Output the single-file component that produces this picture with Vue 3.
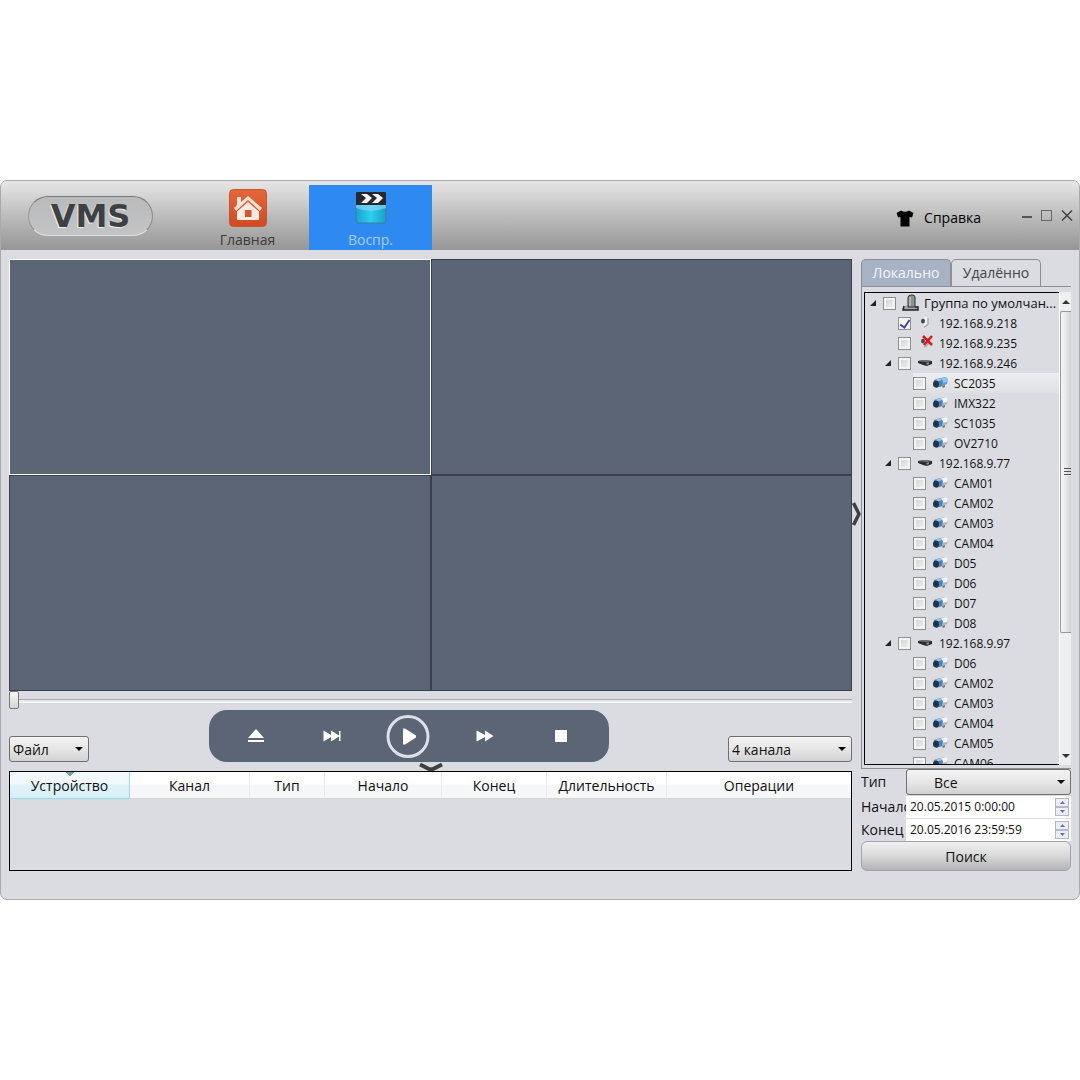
<script setup>
import { ref } from 'vue'

const file = ref('Файл')
const layout = ref('4 канала')
const recordType = ref('Все')
const position = ref(0)
const dates = ref([
  { id: 'start', label: 'Начало', value: '20.05.2015 0:00:00' },
  { id: 'end', label: 'Конец', value: '20.05.2016 23:59:59' },
])

const columns = [
  { title: 'Устройство', cls: 'c-device' },
  { title: 'Канал', cls: 'c-channel' },
  { title: 'Тип', cls: 'c-type' },
  { title: 'Начало', cls: 'c-start' },
  { title: 'Конец', cls: 'c-end' },
  { title: 'Длительность', cls: 'c-length' },
  { title: 'Операции', cls: 'c-actions' },
]

const cams = (...names) => names.map((name) => ({ name, level: 3, kind: 'cam', checked: false }))
const tree = ref([
  { name: 'Группа по умолчан...', level: 1, kind: 'group', open: true, checked: false },
  { name: '192.168.9.218', level: 2, kind: 'ipc', checked: true },
  { name: '192.168.9.235', level: 2, kind: 'offline', checked: false },
  { name: '192.168.9.246', level: 2, kind: 'dvr', open: true, checked: false },
  { name: 'SC2035', level: 3, kind: 'cam', checked: false, active: true },
  ...cams('IMX322', 'SC1035', 'OV2710'),
  { name: '192.168.9.77', level: 2, kind: 'dvr', open: true, checked: false },
  ...cams('CAM01', 'CAM02', 'CAM03', 'CAM04', 'D05', 'D06', 'D07', 'D08'),
  { name: '192.168.9.97', level: 2, kind: 'dvr', open: true, checked: false },
  ...cams('D06', 'CAM02', 'CAM03', 'CAM04', 'CAM05', 'CAM06'),
])
</script>

<template>
  <div class="page">
    <div class="window">
      <header class="header">
        <div class="logo">VMS</div>
        <nav class="nav">
          <a href="#" class="nav-item">
            <svg width="38" height="38" viewBox="0 0 38 38">
              <defs>
                <linearGradient id="home-bg" x1="0" y1="0" x2="0" y2="1">
                  <stop offset="0" stop-color="#e4673a" />
                  <stop offset="1" stop-color="#cf4c22" />
                </linearGradient>
              </defs>
              <rect x="0.5" y="0.5" width="37" height="37" rx="4" fill="url(#home-bg)" stroke="#c4552e" />
              <path d="M8 8h4v5l7-6 14 12-2 3-12-11L7 22l-2-3 3-3z" fill="#fbe3d8" />
              <path d="M8 22.500 19 13l11 9.500V31H8z" fill="#fbeae2" />
              <rect x="16" y="21" width="6.500" height="7" fill="#d4552b" />
            </svg>
            <span>Главная</span>
          </a>
          <a href="#" class="nav-item active">
            <svg width="32" height="34" viewBox="0 0 32 34">
              <defs>
                <linearGradient id="clap" x1="0" y1="0" x2="1" y2="0">
                  <stop offset="0" stop-color="#1d9fd0" />
                  <stop offset="0.5" stop-color="#2cd0f2" />
                  <stop offset="1" stop-color="#1d9ccc" />
                </linearGradient>
              </defs>
              <path d="M1 13h30v17q0 2-2 2H3q-2 0-2-2z" fill="url(#clap)" stroke="#3d7ca6" />
              <path d="M1 13h30v4q-15 6-30 0z" fill="#8bdcf5" opacity="0.6" />
              <path d="M2 1h28q1 0 1 1v12H1V2q0-1 1-1z" fill="#25292d" />
              <path d="M6 3h6l5 4-5 5H6l5-5zM17 3h6l5 4-5 5h-6l5-5z" fill="#f4f4f4" />
            </svg>
            <span>Воспр.</span>
          </a>
        </nav>
        <a href="#" class="help">
          <svg width="18" height="17" viewBox="0 0 18 17">
            <path d="M5 0.500Q9 3 13 0.500L17.500 3 16 7.500 13.500 7V16.500H4.500V7L2 7.500 0.500 3z" fill="#000" />
          </svg>
          <span>Справка</span>
        </a>
        <div class="win-buttons">
          <button type="button" aria-label="Свернуть">
            <svg width="12" height="12" viewBox="0 0 12 12"><path d="M1 8h10" stroke="#555" stroke-width="2" /></svg>
          </button>
          <button type="button" aria-label="Развернуть">
            <svg width="12" height="12" viewBox="0 0 12 12"><rect x="0.500" y="1.500" width="10" height="10" fill="none" stroke="#666" /></svg>
          </button>
          <button type="button" aria-label="Закрыть">
            <svg width="12" height="12" viewBox="0 0 12 12"><path d="M1 1.500l10 10M11 1.500l-10 10" stroke="#444" stroke-width="1.500" /></svg>
          </button>
        </div>
      </header>

      <main class="main">
        <section class="player">
          <div class="videos">
            <div v-for="n in 4" :key="n" class="video" :class="{ selected: n === 1 }"></div>
          </div>
          <input v-model="position" class="seek" type="range" min="0" max="100" aria-label="Позиция" />
          <div class="controls">
            <span class="select file">
              <select v-model="file" aria-label="Файл"><option>Файл</option></select>
              <svg width="8" height="4" viewBox="0 0 8 4"><path d="M0 0h8L4 4z" /></svg>
            </span>
            <div class="transport">
              <button type="button" aria-label="Извлечь">
                <svg width="16" height="16" viewBox="0 0 16 16" fill="#fff"><path d="M8 1l8 9H0zM0 12h16v2H0z" /></svg>
              </button>
              <button type="button" aria-label="Кадр вперёд">
                <svg width="18" height="12" viewBox="0 0 18 12" fill="#fff"><path d="M0.500 0.500 8 5V0.500L16 5.500V1h1.500v10H16V6.500L8 11.500V7L0.500 11.500z" /></svg>
              </button>
              <button type="button" aria-label="Воспроизвести">
                <svg width="44" height="44" viewBox="0 0 44 44">
                  <circle cx="22" cy="22.500" r="20" fill="none" stroke="#dce0e8" stroke-width="3" />
                  <path d="M17 14.500v16h2l11-7v-2l-11-7z" fill="#fff" />
                </svg>
              </button>
              <button type="button" aria-label="Быстрее">
                <svg width="18" height="12" viewBox="0 0 18 12" fill="#fff"><path d="M0.500 0.500 9 5V0.500L17.500 6 9 11.500V7L0.500 11.500z" /></svg>
              </button>
              <button type="button" aria-label="Стоп">
                <svg width="12" height="12" viewBox="0 0 12 12"><path d="M0 0h12v12H0z" fill="#fff" /></svg>
              </button>
            </div>
            <span class="select layout">
              <select v-model="layout" aria-label="Каналы"><option>4 канала</option></select>
              <svg width="8" height="4" viewBox="0 0 8 4"><path d="M0 0h8L4 4z" /></svg>
            </span>
          </div>
          <button class="fold-down" type="button" aria-label="Свернуть таблицу">
            <svg width="24" height="9" viewBox="0 0 24 9"><path d="M1 2.500 9 6.500q3 1.500 6 0L23 2.500" fill="none" stroke="#3f4043" stroke-width="4" /></svg>
          </button>
          <div class="records">
            <table>
              <thead>
                <tr>
                  <th v-for="c in columns" :key="c.title" :class="c.cls">{{ c.title }}</th>
                </tr>
              </thead>
            </table>
          </div>
        </section>

        <div class="splitter">
          <button type="button" aria-label="Скрыть панель">
            <svg width="9" height="24" viewBox="0 0 9 24"><path d="M1.500 1 7 12 1.500 23" fill="none" stroke="#3f4043" stroke-width="3.500" /></svg>
          </button>
        </div>

        <aside class="side">
          <div class="tabs">
            <button type="button" class="tab on">Локально</button>
            <button type="button" class="tab">Удалённо</button>
          </div>
          <div class="tree-frame">
            <div class="tree">
              <ul>
                <li v-for="(item, i) in tree" :key="i" :class="['level-' + item.level, { active: item.active }]">
                  <span class="twist">
                    <svg v-if="item.open" width="6" height="6" viewBox="0 0 6 6"><path d="M6 0v6H0z" fill="#222" /></svg>
                  </span>
                  <label>
                    <input v-model="item.checked" type="checkbox" />
                    <svg v-if="item.kind === 'group'" class="icon-group" width="18" height="18" viewBox="0 0 18 18">
                      <path d="M2 12l5-1 9 1v4H2z" fill="#a3aaa5" />
                      <path d="M6 13V3q0-2 4-2 3 0 3 2v10z" fill="#8a948d" stroke="#303530" />
                      <path d="M8 3v9" stroke="#d4dad5" />
                      <path d="M2 12l-1 4h15v-3h-3" fill="none" stroke="#222" stroke-width="1.500" />
                    </svg>
                    <svg v-else-if="item.kind === 'ipc' || item.kind === 'offline'" class="icon" width="16" height="16" viewBox="0 0 16 16">
                      <path d="M5 3l5-1 1 6-4 3z" fill="#f2f2f2" />
                      <path d="M11 3v6q-1 2-4 3" fill="none" stroke="#aaa" stroke-width="1.500" />
                      <ellipse cx="6" cy="6" rx="2" ry="2.500" fill="#4a4a4e" />
                      <path v-if="item.kind === 'offline'" d="M6 1l9 9M15 1L7 10" stroke="#d8171c" stroke-width="2.500" />
                    </svg>
                    <svg v-else-if="item.kind === 'dvr'" class="icon" width="16" height="16" viewBox="0 0 16 16">
                      <path d="M1 6l6-1 8 1v3l-5 2-4-1-5-2z" fill="#2b2b2d" />
                      <path d="M1 6l6-1 8 1-6 1z" fill="#777" />
                      <path d="M9 8l3-1v2l-2 1z" fill="#8a8a8c" />
                    </svg>
                    <svg v-else class="icon" width="16" height="16" viewBox="0 0 16 16">
                      <path d="M6 4l7-2 3 2-1 5-7 3z" :fill="item.active ? '#5d9bd8' : '#aab6c2'" />
                      <path d="M8 4l6-2 2 2-1 3-6 1z" :fill="item.active ? '#8cc4f2' : '#f2f5f8'" />
                      <path d="M2 5l6-2 3 3-1 5-6 2z" fill="#4d83b5" />
                      <path d="M3 5l5-2 2 2-5 2z" fill="#9cc4e6" />
                      <ellipse cx="4" cy="9" rx="3" ry="3.500" fill="#20344a" />
                      <path d="M10 11l3-1v2l-2 1z" fill="#777" />
                    </svg>
                    <span class="name">{{ item.name }}</span>
                  </label>
                </li>
              </ul>
              <div class="scroll">
                <svg width="8" height="4" viewBox="0 0 8 4"><path d="M4 0l4 4H0z" fill="#333" /></svg>
                <div class="thumb"><i></i><i></i><i></i></div>
                <svg width="8" height="4" viewBox="0 0 8 4"><path d="M0 0h8L4 4z" fill="#333" /></svg>
              </div>
            </div>
          </div>
          <form class="search" @submit.prevent>
            <div class="field">
              <label for="type">Тип</label>
              <span class="select type">
                <select id="type" v-model="recordType"><option>Все</option></select>
                <svg width="8" height="4" viewBox="0 0 8 4"><path d="M0 0h8L4 4z" /></svg>
              </span>
            </div>
            <div v-for="d in dates" :key="d.id" class="field date">
              <label :for="d.id">{{ d.label }}</label>
              <div class="date-box">
                <input :id="d.id" v-model="d.value" type="text" />
                <span class="spin">
                  <button type="button" aria-label="Больше">
                    <svg width="5" height="3" viewBox="0 0 5 3"><path d="M2.500 0L5 3H0z" fill="#6670a8" /></svg>
                  </button>
                  <button type="button" aria-label="Меньше">
                    <svg width="5" height="3" viewBox="0 0 5 3"><path d="M0 0h5L2.500 3z" fill="#6670a8" /></svg>
                  </button>
                </span>
              </div>
            </div>
            <button type="submit" class="go">Поиск</button>
          </form>
        </aside>
      </main>
    </div>
  </div>
</template>

<style>
body {
  margin: 0;
  background: #fff;
}
</style>

<style scoped>
* {
  box-sizing: border-box;
}
svg {
  display: block;
  flex: none;
}
button,
input,
select {
  font: inherit;
  color: inherit;
  margin: 0;
}
button {
  padding: 0;
  border: 0;
  background: none;
}
.page {
  min-height: 100vh;
  display: flex;
  flex-direction: column;
  justify-content: center;
  font: 14px/20px "Open Sans", "Noto Sans", sans-serif;
  color: #111;
}
.window {
  border: 1px solid #a9aaad;
  border-radius: 7px;
  background: #dbdce1;
  overflow: hidden;
}
.header {
  height: 69px;
  display: flex;
  background: linear-gradient(#e6e6e6, #bdbdbd 50%, #969696);
}
.logo {
  width: 125px;
  height: 40px;
  margin: 15px 0 0 27px;
  border: 1px solid;
  border-color: #777 #888 #ddd #999;
  border-radius: 20px;
  background: linear-gradient(#b9babc, #c3c4c6);
  font: bold 32px/38px "DejaVu Sans", sans-serif;
  text-align: center;
  color: #3f4042;
  text-shadow: -1px 1px 0 #eee;
}
.nav {
  display: flex;
  margin: 4px 0 0 33px;
}
.nav-item {
  width: 123px;
  display: flex;
  flex-direction: column;
  align-items: center;
  justify-content: space-between;
  padding-top: 4px;
  color: #3b3b3b;
  text-decoration: none;
}
.nav-item.active {
  background: #2e8af0;
  color: #a9cbf2;
  padding-top: 6px;
}
.help {
  margin: 28px 40px 0 auto;
  height: 18px;
  display: flex;
  align-items: center;
  gap: 10px;
  color: #000;
  text-decoration: none;
}
.win-buttons {
  display: flex;
  gap: 8px;
  padding: 28px 6px 0 0;
  align-items: flex-start;
}
.main {
  display: flex;
  padding: 9px 8px 28px;
}
.player {
  flex: 1;
  min-width: 0;
  display: flex;
  flex-direction: column;
}
.videos {
  display: grid;
  grid-template-columns: 1fr 1fr;
  grid-auto-rows: 216px;
}
.video {
  background: #5c6575;
  border: 1px solid #3a3f49;
}
.video.selected {
  border-color: #fff;
}
.seek {
  appearance: none;
  width: 100%;
  height: 19px;
  background: none;
}
.seek::-webkit-slider-runnable-track {
  height: 4px;
  background: #e8e9ec;
  border-top: 1px solid #aaa;
  border-bottom: 1px solid #fff;
}
.seek::-webkit-slider-thumb {
  appearance: none;
  width: 10px;
  height: 18px;
  margin-top: -9px;
  border: 1px solid #777;
  border-radius: 2px;
  background: linear-gradient(#f7f7f7, #d5d5d5);
}
.controls {
  display: flex;
  justify-content: space-between;
  align-items: flex-end;
}
.select {
  position: relative;
  display: block;
}
.select select {
  appearance: none;
  display: block;
  width: 100%;
  height: 26px;
  padding: 1px 20px 0 3px;
  border: 1px solid #707070;
  border-radius: 3px;
  background: linear-gradient(#f3f3f3, #e6e6e6 50%, #d2d2d2);
  line-height: 20px;
}
.select svg {
  position: absolute;
  right: 6px;
  top: 11px;
  pointer-events: none;
}
.file {
  width: 80px;
}
.layout {
  width: 124px;
}
.transport {
  width: 400px;
  height: 52px;
  padding: 0 9px;
  display: grid;
  grid-template-columns: repeat(5, 1fr);
  border-radius: 18px;
  background: #5c6575;
}
.transport button {
  display: flex;
  align-items: center;
  justify-content: center;
}
.fold-down {
  height: 9px;
  display: flex;
  justify-content: center;
}
.records {
  height: 100px;
  border: 1px solid #000;
}
table {
  width: 100%;
  border-collapse: separate;
  border-spacing: 0;
  table-layout: fixed;
}
th {
  height: 27px;
  padding: 2px 0 0;
  border-right: 1px solid #e8ebee;
  border-bottom: 1px solid #d5d5d5;
  background: linear-gradient(#fff 45%, #f5f7f9 50%, #f7f8fa);
  font-weight: normal;
}
.c-device {
  width: 120px;
  border-color: #96d9f9;
  background:
    conic-gradient(from -45deg at 50% 4px, #7ba0b5 90deg, transparent 0) 50% 0 / 8px 4px no-repeat,
    linear-gradient(#f2f9fc 45%, #e1f3fa 50%, #d8eff9);
}
.c-channel { width: 120px; }
.c-type { width: 75px; }
.c-start { width: 117px; }
.c-end { width: 105px; }
.c-length { width: 120px; }
.c-actions { border-right: 0; }
.splitter {
  width: 9px;
  padding-top: 243px;
}
.side {
  width: 210px;
  display: flex;
  flex-direction: column;
}
.tabs {
  display: flex;
  height: 27px;
}
.tab {
  width: 90px;
  border: 1px solid #8b8e94;
  border-bottom: 0;
  border-radius: 5px 5px 0 0;
  color: #444;
}
.tab.on {
  background: #a7b3c5;
  color: #f4f6f9;
}
.tree-frame {
  flex: 1;
  display: flex;
  padding: 5px 0 3px 2px;
  border: 1px solid #8b8e94;
  border-right: 0;
}
.tree {
  flex: 1;
  display: flex;
  contain: size;
  overflow: hidden;
}
ul {
  flex: 1;
  min-width: 0;
  margin: 0;
  padding: 0;
  list-style: none;
  overflow: hidden;
  border: 1px solid #000;
  border-right: 0;
  font-size: 12px;
}
li {
  display: flex;
  align-items: center;
  height: 20px;
}
li label {
  flex: 1;
  display: flex;
  align-items: center;
  height: 20px;
  white-space: nowrap;
}
.name {
  padding-top: 2px;
}
.level-2 {
  padding-left: 15px;
}
.level-3 {
  padding-left: 30px;
}
.active label {
  background: linear-gradient(#ecedef, #dfe0e2);
}
.twist {
  width: 18px;
  padding-left: 5px;
}
li input {
  appearance: none;
  flex: none;
  width: 13px;
  height: 13px;
  border: 1px solid #8e8f8f;
  background: linear-gradient(135deg, #cbcfd5, #f6f6f6);
  box-shadow: inset 0 0 0 2px #f4f4f4;
}
li input:checked {
  background: #f8f8f8;
  display: grid;
  place-items: center;
}
li input:checked::after {
  content: "";
  width: 4px;
  height: 8px;
  margin-bottom: 2px;
  border: solid #3c4f94;
  border-width: 0 2px 2px 0;
  transform: rotate(35deg);
}
.icon {
  margin: 0 6px;
}
.icon-group {
  margin: 0 4px 0 6px;
}
.level-1 .name {
  padding-top: 0;
  font-size: 13px;
}
.scroll {
  width: 12px;
  display: flex;
  flex-direction: column;
  align-items: center;
  padding: 8px 0 7px;
  gap: 7px;
  border-left: 1px solid #fff;
  background: #eeeff0;
}
.thumb {
  width: 11px;
  height: 322px;
  margin-bottom: auto;
  display: flex;
  flex-direction: column;
  align-items: flex-end;
  justify-content: center;
  gap: 1px;
  border: 1px solid #999;
  border-right: 0;
  border-radius: 2px 0 0 2px;
  background: linear-gradient(90deg, #f5f5f5, #e9e9eb 50%, #d0d1d5);
}
.thumb i {
  width: 7px;
  height: 2px;
  border-top: 1px solid #555;
}
.field {
  display: flex;
  align-items: center;
}
.field > label {
  width: 45px;
  overflow: hidden;
  white-space: nowrap;
}
.field > .type {
  flex: 1;
}
.type select {
  padding-left: 27px;
}
.date {
  height: 23px;
}
.date-box {
  flex: 1;
  min-width: 0;
  height: 22px;
  display: flex;
  align-items: center;
  padding-right: 2px;
  background: #fff;
}
.date-box input {
  flex: 1;
  min-width: 0;
  height: 20px;
  padding: 0 0 0 4px;
  border: 0;
  background: none;
  font-size: 12px;
}
.spin {
  width: 14px;
  display: grid;
}
.spin button {
  height: 9px;
  display: flex;
  align-items: center;
  justify-content: center;
  border: 1px solid #b5b8c8;
  background: #eceef6;
}
.go {
  width: 100%;
  height: 30px;
  padding-top: 2px;
  border: 1px solid #a2a3a6;
  border-radius: 6px;
  background: linear-gradient(#f0f0f0, #d8d8d8 50%, #b4b4b4);
}
</style>
